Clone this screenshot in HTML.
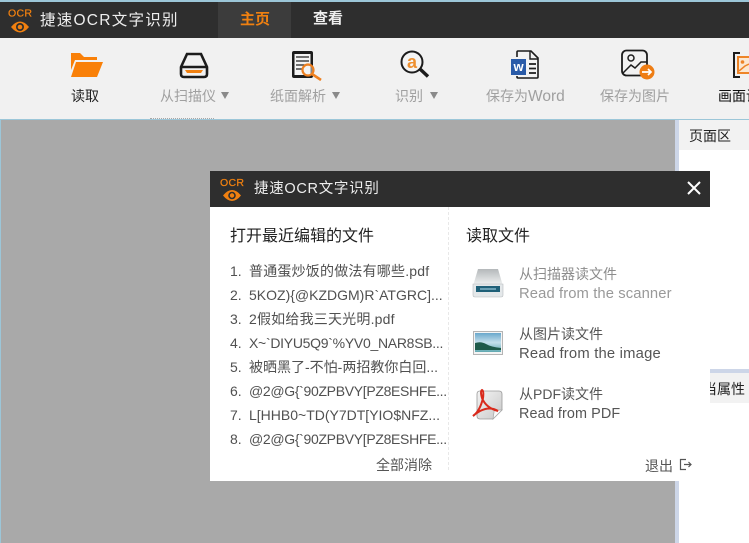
<!DOCTYPE html>
<html><head><meta charset="utf-8"><style>
html,body{margin:0;padding:0;background:#a9a9a9}
#r{position:relative;width:749px;height:543px;overflow:hidden;background:#a9a9a9;font-family:"Liberation Sans","Noto Sans CJK SC",sans-serif}
#r div,#r svg{position:absolute}
.t{white-space:nowrap;line-height:18px}
.g{color:#a0a0a0;font-size:14px}
.l{font-size:14px;color:#505050;left:230px}
.a{width:0;height:0;border-left:4.5px solid transparent;border-right:4.5px solid transparent;border-top:7px solid #8a8a8a;top:92px}
</style></head><body><div id="r">
<div style="left:0;top:0;width:749px;height:2px;background:#9cc6d8"></div>
<div style="left:0;top:2px;width:749px;height:36px;background:#2e2e2e"></div>
<div style="left:218px;top:2px;width:73px;height:36px;background:#3c3c3c"></div>
<div style="left:0;top:38px;width:749px;height:81px;background:#f1f1f1"></div>
<div style="left:0;top:119px;width:749px;height:1px;background:#9cc6d8"></div>
<div style="left:0;top:120px;width:1px;height:423px;background:#9cc6d8"></div>
<div style="left:675px;top:120px;width:74px;height:423px;background:#fff"></div>
<div style="left:675px;top:120px;width:4px;height:423px;background:#cdd6e8"></div>
<div style="left:679px;top:120px;width:70px;height:30px;background:#f2f2f2"></div>
<div class="t" style="left:689px;top:127px;font-size:14px;color:#222">页面区</div>
<div style="left:710px;top:369px;width:39px;height:4px;background:#cdd6e8"></div>
<div style="left:710px;top:373px;width:39px;height:30px;background:#f2f2f2"></div>
<div style="left:710px;top:373px;width:39px;height:30px;overflow:hidden"><div class="t" style="left:-7px;top:7px;font-size:14px;color:#222">当属性</div></div>

<svg style="left:8px;top:8px" width="28" height="28" viewBox="0 0 28 28"><path d="M3 19q9-11 18 0q-9 11-18 0z" fill="#f08010"/><circle cx="12" cy="19" r="4" fill="#2e2e2e"/><circle cx="12" cy="19" r="2.300" fill="#f08010"/><text x="0" y="8.500" font-family="Liberation Sans" font-size="10.500" fill="#f08010" stroke="#f08010" stroke-width=".25" letter-spacing=".3">OCR</text></svg>
<div class="t" style="left:40px;top:12px;font-size:15.500px;color:#eee;letter-spacing:1.250px">捷速OCR文字识别</div>
<div class="t" style="left:240px;top:11px;font-size:15px;color:#f08010;font-weight:bold">主页</div>
<div class="t" style="left:313px;top:10px;font-size:15px;color:#eee;font-weight:bold">查看</div>

<svg style="left:70px;top:52px" width="34" height="27" viewBox="0 0 34 27"><path d="M1 1h9l4 4h13v3H5L1 18z" fill="#f98008"/><path d="M6 10h27l-6 15H1z" fill="#f98008"/></svg>
<div class="t" style="left:71px;top:87px;font-size:14px;color:#222">读取</div>

<svg style="left:179px;top:52px" width="30" height="27" viewBox="0 0 30 27"><path d="M8 2h14l6 13v7q0 3-3 3H5q-3 0-3-3v-7zM2 15h26" fill="none" stroke="#1c1c1c" stroke-width="2.600"/><path d="M6 18h18l-2 3H8z" fill="#f08010"/></svg>
<div class="t g" style="left:160px;top:87px">从扫描仪</div>
<div class="a" style="left:221px"></div>

<svg style="left:290px;top:49px" width="36" height="32" viewBox="0 0 36 32"><rect x="2" y="2" width="21" height="27" rx="2" fill="#1c1c1c"/><rect x="4.500" y="5" width="16" height="21" fill="#f4f4f4"/><path d="M6 8h13M6 12h13M6 16h13M6 20h7" stroke="#222" stroke-width="1.200"/><circle cx="18" cy="21" r="5.500" fill="#f4f4f4" fill-opacity=".5" stroke="#ee8020" stroke-width="2.200"/><path d="M22 25l9 6" stroke="#ee8020" stroke-width="2.600"/></svg>
<div class="t g" style="left:270px;top:87px">纸面解析</div>
<div class="a" style="left:332px"></div>

<svg style="left:400px;top:49px" width="32" height="32" viewBox="0 0 32 32"><circle cx="12" cy="13" r="10.500" fill="#f4f4f4" stroke="#1c1c1c" stroke-width="2"/><path d="M20 20l8 7.500" stroke="#1c1c1c" stroke-width="3.400"/><text x="12" y="19" text-anchor="middle" font-family="Liberation Sans" font-weight="bold" font-size="18" fill="#ee9030">a</text></svg>
<div class="t g" style="left:395px;top:87px">识别</div>
<div class="a" style="left:430px"></div>

<svg style="left:510px;top:49px" width="32" height="32" viewBox="0 0 32 32"><path d="M7 8V3q0-1 1-1h13l7 7v19q0 1-1 1H8q-1 0-1-1v-1" fill="#f4f4f4" stroke="#1c1c1c" stroke-width="1.600"/><path d="M20 2v8h8" fill="none" stroke="#1c1c1c" stroke-width="1.400"/><rect x="1" y="10" width="15" height="16" fill="#2a5ba8"/><path d="M19 15h7M19 19.500h7M19 24h7" stroke="#1c1c1c" stroke-width="1.800"/><text x="8.500" y="22" text-anchor="middle" font-family="Liberation Sans" font-weight="bold" font-size="13" fill="#fff">w</text></svg>
<div class="t" style="left:486px;top:87px;font-size:14px;color:#a0a0a0">保存为<span style="font-size:15.500px">Word</span></div>

<svg style="left:620px;top:49px" width="36" height="32" viewBox="0 0 36 32"><rect x="2" y="1.500" width="25" height="25" rx="4.500" fill="none" stroke="#1c1c1c" stroke-width="1.800"/><circle cx="11" cy="9" r="3" fill="none" stroke="#1c1c1c" stroke-width="1.500"/><path d="M3 24l8-8 4 3 6-6h6" fill="none" stroke="#1c1c1c" stroke-width="1.500"/><circle cx="27" cy="23" r="7.500" fill="#ee7d14"/><path d="M22 23h9M28 20l3 3-3 3" fill="none" stroke="#fff" stroke-width="1.700"/></svg>
<div class="t g" style="left:600px;top:87px">保存为图片</div>

<svg style="left:732px;top:50px" width="17" height="30" viewBox="0 0 17 30"><path d="M8 3H2v24h6" fill="none" stroke="#1c1c1c" stroke-width="2"/><rect x="6" y="7" width="16" height="16" fill="#fbe8d2" stroke="#ee8528" stroke-width="2"/><circle cx="10.500" cy="12" r="1.800" fill="#ee8528"/><path d="M7 21l6-5 4-2" fill="none" stroke="#ee8528" stroke-width="1.500"/></svg>
<div class="t" style="left:718px;top:87px;font-size:14px;color:#111">画面设置</div>
<div style="left:150px;top:118px;width:64px;height:0;border-top:1px dotted #888;opacity:.7"></div>

<div style="left:210px;top:171px;width:500px;height:310px;background:#fff"></div>
<div style="left:210px;top:171px;width:500px;height:36px;background:#2e2e2e"></div>
<svg style="left:218px;top:175px" width="30" height="30" viewBox="0 0 30 30"><path d="M5 20.500q9-11 18 0q-9 11-18 0z" fill="#f08010"/><circle cx="14" cy="20.500" r="3.800" fill="#2e2e2e"/><circle cx="14" cy="20.500" r="2.200" fill="#f08010"/><text x="2" y="11" font-family="Liberation Sans" font-size="10.500" fill="#f08010" stroke="#f08010" stroke-width=".25" letter-spacing=".3">OCR</text></svg>
<div class="t" style="left:254px;top:180px;font-size:14.500px;color:#eee;letter-spacing:.7px">捷速OCR文字识别</div>
<svg style="left:686px;top:180px" width="16" height="16" viewBox="0 0 16 16"><path d="M2 2l12 12M14 2L2 14" stroke="#fff" stroke-width="2"/></svg>
<div style="left:448px;top:207px;width:0;height:263px;border-left:1px dashed #e8e8e8"></div>

<div class="t" style="left:230px;top:228px;font-size:16px;color:#222">打开最近编辑的文件</div>
<div class="t l" style="top:262px">1.</div><div class="t l" style="left:249px;top:262px;letter-spacing:.2px">普通蛋炒饭的做法有哪些.pdf</div>
<div class="t l" style="top:286px">2.</div><div class="t l" style="left:249px;top:286px">5KOZ){@KZDGM)R`ATGRC]...</div>
<div class="t l" style="top:310px">3.</div><div class="t l" style="left:249px;top:310px;letter-spacing:.2px">2假如给我三天光明.pdf</div>
<div class="t l" style="top:334px">4.</div><div class="t l" style="left:249px;top:334px;letter-spacing:-.28px">X~`DIYU5Q9`%YV0_NAR8SB...</div>
<div class="t l" style="top:358px">5.</div><div class="t l" style="left:249px;top:358px">被晒黑了-不怕-两招教你白回...</div>
<div class="t l" style="top:382px">6.</div><div class="t l" style="left:249px;top:382px;letter-spacing:-.32px">@2@G{`90ZPBVY[PZ8ESHFE...</div>
<div class="t l" style="top:406px">7.</div><div class="t l" style="left:249px;top:406px">L[HHB0~TD(Y7DT[YIO$NFZ...</div>
<div class="t l" style="top:430px">8.</div><div class="t l" style="left:249px;top:430px;letter-spacing:-.32px">@2@G{`90ZPBVY[PZ8ESHFE...</div>
<div class="t" style="left:376px;top:456px;font-size:14px;color:#555">全部消除</div>

<div class="t" style="left:466px;top:228px;font-size:16px;color:#222">读取文件</div>

<svg style="left:472px;top:267px" width="32" height="32" viewBox="0 0 32 32"><defs><linearGradient id="a" x1="0" y1="0" x2="0" y2="1"><stop offset="0" stop-color="#b4b8ba"/><stop offset="1" stop-color="#f4f6f6"/></linearGradient></defs><path d="M6 2h20l5 17H1z" fill="url(#a)"/><path d="M1 17h30v11q0 2-2 2H3q-2 0-2-2z" fill="#e4e8ea" stroke="#b8bcbe" stroke-width=".6"/><rect x="4" y="19" width="24" height="6" fill="#1f6078"/><rect x="8" y="21" width="16" height="2" fill="#6aa0b4"/></svg>
<div class="t" style="left:519px;top:265px;font-size:14px;color:#8c8c8c">从扫描器读文件</div>
<div class="t" style="left:519px;top:285px;font-size:14.800px;color:#999;letter-spacing:.1px">Read from the scanner</div>

<svg style="left:473px;top:331px" width="30" height="24" viewBox="0 0 30 24"><defs><linearGradient id="b" x1="0" y1="0" x2="0" y2="1"><stop offset="0" stop-color="#6aa8cc"/><stop offset=".5" stop-color="#c4e0ec"/><stop offset="1" stop-color="#60a8b0"/></linearGradient></defs><rect x=".5" y=".5" width="29" height="23" fill="#f4f4f4" stroke="#b4b4b4"/><rect x="2" y="2" width="26" height="19" fill="url(#b)"/><path d="M2 12q6-2 11 1t15 4v2H2z" fill="#1e5a4a"/></svg>
<div class="t" style="left:519px;top:325px;font-size:14px;color:#555">从图片读文件</div>
<div class="t" style="left:519px;top:345px;font-size:14.800px;color:#555;letter-spacing:.2px">Read from the image</div>

<svg style="left:472px;top:388px" width="32" height="32" viewBox="0 0 32 32"><defs><linearGradient id="c" x1="0" y1="0" x2="1" y2="1"><stop offset="0" stop-color="#f4f4f4"/><stop offset="1" stop-color="#c8c8c8"/></linearGradient></defs><path d="M8 3h19q3 0 3 3v16l-9 9H8q-3 0-3-3V6q0-3 3-3z" fill="url(#c)" stroke="#9a9a9a" stroke-width=".8"/><path d="M21 31l1-7q0-2 2-2h6z" fill="#fafafa" stroke="#aaa" stroke-width=".8"/><path d="M1 28Q8 23 11 10Q12 3 10 2Q8 3 10 10Q14 20 26 23Q18 18 8 23Q3 26 1 28z" fill="none" stroke="#d92a1c" stroke-width="2"/></svg>
<div class="t" style="left:519px;top:385px;font-size:14px;color:#555">从PDF读文件</div>
<div class="t" style="left:519px;top:405px;font-size:14.400px;color:#555;letter-spacing:.1px">Read from PDF</div>

<div class="t" style="left:645px;top:457px;font-size:14px;color:#555">退出</div>
<svg style="left:679px;top:458px" width="14" height="14" viewBox="0 0 14 14"><path d="M7 1.500H1.500v10H7M5 6.500h7M9.500 4l2.500 2.500L9.500 9" fill="none" stroke="#555" stroke-width="1.200"/></svg>
</div></body></html>
